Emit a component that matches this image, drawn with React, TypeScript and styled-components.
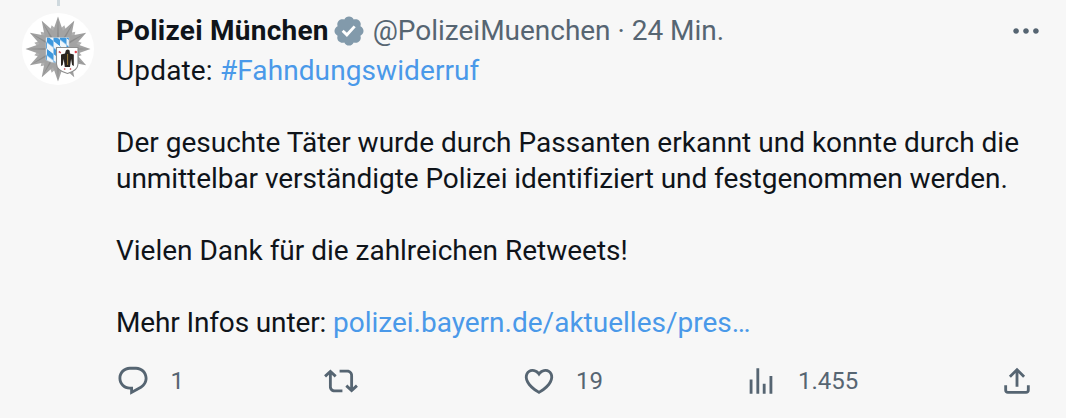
import React from 'react';
import styled, { createGlobalStyle } from 'styled-components';

const color = {
  page: '#f7f7f7',
  text: '#0f141a',
  muted: '#566572',
  link: '#4a99e9',
  badge: '#829aab',
  thread: '#cfd9de',
};

const GlobalStyle = createGlobalStyle`
  * { box-sizing: border-box; }
  body {
    margin: 0;
    background: ${color.page};
    color: ${color.text};
    font-family: Roboto, "Liberation Sans", sans-serif;
  }
`;

const Tweet = styled.article`
  display: grid;
  grid-template-columns: 58px 1fr;
  column-gap: 36px;
  width: 1066px;
  height: 418px;
  padding-left: 21px;
  overflow: hidden;
`;

const AvatarColumn = styled.div`
  display: flex;
  flex-direction: column;
  align-items: center;
  width: 74px;
`;

const ThreadLine = styled.div`
  width: 3px;
  height: 6px;
  margin-bottom: 6px;
  background: ${color.thread};
`;

const Avatar = styled.svg`
  display: block;
  width: 74px;
  height: 74px;
`;

const Content = styled.div`
  display: flex;
  flex-direction: column;
`;

const Header = styled.header`
  display: flex;
  align-items: center;
  height: 36px;
  margin-top: 13px;
  padding-left: 1px;
  padding-right: 23px;
  font-size: 28px;
  line-height: 36px;
  white-space: pre;
`;

const DisplayName = styled.span`
  font-weight: 700;
  letter-spacing: 0.25px;
`;

const Meta = styled.span`
  margin-left: 7px;
  color: ${color.muted};
  letter-spacing: -0.02px;
`;

const Icon = styled.svg<{ $tone?: string }>`
  display: block;
  flex: none;
  width: 34px;
  height: 34px;
  fill: ${p => p.$tone ?? color.muted};
`;

const BadgeSlot = styled.span`
  margin-left: 3px;
`;

const MenuSlot = styled.span`
  margin-left: auto;
`;

const Body = styled.div`
  margin-top: 4px;
  padding-left: 1px;
  font-size: 28px;
  line-height: 36px;
  white-space: pre;
`;

const Line = styled.p<{ $tracking?: number }>`
  height: 36px;
  margin: 0;
  letter-spacing: ${p => p.$tracking ?? 0}px;
`;

const Link = styled.a<{ $tracking?: number }>`
  color: ${color.link};
  letter-spacing: ${p => p.$tracking ?? 0}px;
`;

const Actions = styled.footer`
  display: grid;
  grid-template-columns: 208px 197.5px 222px 256.5px 34px;
  align-items: center;
  height: 34px;
  margin-top: 22px;
  margin-left: 1px;
`;

const Action = styled.div`
  display: flex;
  align-items: center;
  gap: 20.500px;
`;

const Count = styled.span`
  padding-top: 1px;
  color: ${color.muted};
  font-size: 24px;
  line-height: 34px;
`;

const starPoints = (rays: number, outer: number, inner: number, turn: number) =>
  Array.from({ length: rays * 2 }, (_, i) => {
    const r = i % 2 ? inner : outer;
    const a = (Math.PI * i) / rays + turn - Math.PI / 2;
    return `${(37 + r * Math.cos(a)).toFixed(2)},${(37 + r * Math.sin(a)).toFixed(2)}`;
  }).join(' ');

const PoliceStar = () => (
  <Avatar viewBox="0 0 74 74">
    <defs>
      <pattern id="lozenges" width="13" height="13" patternUnits="userSpaceOnUse" patternTransform="translate(26 24) skewY(38)">
        <path d="M0 0h13v13H0z" fill="#eff6fb" />
        <path d="M0 0h6.500v6.500H0zM6.500 6.500H13V13H6.500z" fill="#3f98dd" />
      </pattern>
    </defs>
    <circle cx="37" cy="37" r="36" fill="#fff" />
    <polygon points={starPoints(12, 24.5, 18, Math.PI / 12)} fill="#b0b0b0" />
    <polygon points={starPoints(12, 32.5, 19, 0)} fill="#a3a3a3" />
    <polygon points={starPoints(12, 32.5, 5, 0)} fill="#8c8c8c" />
    <path d="M25 25.500h23V51H36q-6 0-11-3z" fill="url(#lozenges)" stroke="#c3ced6" strokeWidth=".6" />
    <path d="M35.500 35.500h21.500v16.500q0 6.500-10.500 9.500Q35.500 58.500 35.500 52z" fill="#fff" stroke="#8d8d8d" strokeWidth="1.100" />
    <path d="M44.800 38.500q2-1.800 3.800 0l.3 3 3.900 1v11.500l-1.700-1-1-6-1.100 8h-5.200l-1.100-8-1 6-1.700 1V42.500l4-1z" fill="#2b2520" />
    <path d="M46.600 42v11" stroke="#a98438" strokeWidth=".9" />
    <path d="M44.200 56.500l-1 1M49 56.500l1 1M37.800 39.500l2 1.300" stroke="#c94a50" strokeWidth="1.500" />
    <circle cx="54.800" cy="40" r="1.200" fill="#e04450" />
  </Avatar>
);

const paths = {
  more: 'M3 12c0-1.1.9-2 2-2s2 .9 2 2-.9 2-2 2-2-.9-2-2zm9 2c1.1 0 2-.9 2-2s-.9-2-2-2-2 .9-2 2 .9 2 2 2zm7 0c1.1 0 2-.9 2-2s-.9-2-2-2-2 .9-2 2 .9 2 2 2z',
  reply: 'M1.751 10c0-4.42 3.584-8 8.005-8h4.366c4.49 0 8.129 3.64 8.129 8.13 0 2.96-1.607 5.68-4.196 7.11l-8.054 4.46v-3.69h-.067c-4.49.1-8.183-3.51-8.183-8.01zm8.005-6c-3.317 0-6.005 2.69-6.005 6 0 3.37 2.77 6.08 6.138 6.01l.351-.01h1.761v2.3l5.087-2.81c1.951-1.08 3.163-3.13 3.163-5.36 0-3.39-2.744-6.13-6.129-6.13H9.756z',
  retweet: 'M4.5 3.88l4.432 4.14-1.364 1.46L5.5 7.55V16c0 1.1.896 2 2 2H13v2H7.5c-2.209 0-4-1.79-4-4V7.55L1.432 9.48.068 8.02 4.5 3.88zM16.5 6H11V4h5.5c2.209 0 4 1.79 4 4v8.45l2.068-1.93 1.364 1.46-4.432 4.14-4.432-4.14 1.364-1.46 2.068 1.93V8c0-1.1-.896-2-2-2z',
  like: 'M16.697 5.5c-1.222-.06-2.679.51-3.89 2.16l-.805 1.09-.806-1.09C9.984 6.01 8.526 5.44 7.304 5.5c-1.243.07-2.349.78-2.91 1.91-.552 1.12-.633 2.78.479 4.82 1.074 1.97 3.257 4.27 7.129 6.61 3.87-2.34 6.052-4.64 7.126-6.61 1.111-2.04 1.03-3.7.477-4.82-.561-1.13-1.666-1.84-2.908-1.91zm4.187 7.69c-1.351 2.48-4.001 5.12-8.379 7.67l-.503.3-.504-.3c-4.379-2.55-7.029-5.19-8.382-7.67-1.36-2.5-1.41-4.86-.514-6.67.887-1.79 2.647-2.91 4.601-3.01 1.651-.09 3.368.56 4.798 2.01 1.429-1.45 3.146-2.1 4.796-2.01 1.954.1 3.714 1.22 4.601 3.01.896 1.81.846 4.17-.514 6.67z',
  views: 'M8.75 21V3h2v18h-2zM18 21V8.5h2V21h-2zM4 21l.004-10h2L6 21H4zm9.248 0v-7h2v7h-2z',
  share: 'M12 2.59l5.7 5.7-1.41 1.42L13 6.41V16h-2V6.41l-3.3 3.3-1.41-1.42L12 2.59zM21 15l-.02 3.51c0 1.38-1.12 2.49-2.5 2.49H5.5C4.11 21 3 19.88 3 18.5V15h2v3.5c0 .28.22.5.5.5h12.98c.28 0 .5-.22.5-.5L19 15h2z',
};

const Glyph = ({ name }: { name: keyof typeof paths }) => (
  <Icon viewBox="0 0 24 24">
    <path d={paths[name]} />
  </Icon>
);

const VerifiedBadge = () => (
  <BadgeSlot>
    <Icon viewBox="0 0 22 22" $tone={color.badge}>
      <path d="M6 6h10v10H6z" fill="#fff" />
      <path d="M20.396 11c-.018-.646-.215-1.275-.57-1.816-.354-.54-.852-.972-1.438-1.246.223-.607.27-1.264.14-1.897-.131-.634-.437-1.218-.882-1.687-.47-.445-1.053-.75-1.687-.882-.633-.13-1.29-.083-1.897.14-.273-.587-.704-1.086-1.245-1.44S11.647 1.62 11 1.604c-.646.017-1.273.213-1.813.568s-.969.854-1.24 1.44c-.608-.223-1.267-.272-1.902-.14-.635.13-1.22.436-1.69.882-.445.47-.749 1.055-.878 1.688-.13.633-.08 1.29.144 1.896-.587.274-1.087.705-1.443 1.245-.356.54-.555 1.17-.574 1.817.02.647.218 1.276.574 1.817.356.54.856.972 1.443 1.245-.224.606-.274 1.263-.144 1.896.13.634.433 1.218.877 1.688.47.443 1.054.747 1.687.878.633.132 1.29.084 1.897-.136.274.586.705 1.084 1.246 1.439.54.354 1.17.551 1.816.569.647-.016 1.276-.213 1.817-.567s.972-.854 1.245-1.44c.604.239 1.266.296 1.903.164.636-.132 1.22-.447 1.68-.907.46-.46.776-1.044.908-1.681s.075-1.299-.165-1.903c.586-.274 1.084-.705 1.439-1.246.354-.54.551-1.17.569-1.816zM9.662 14.85l-3.429-3.428 1.293-1.302 2.072 2.072 4.4-4.794 1.347 1.246z" />
    </Icon>
  </BadgeSlot>
);

export default function App() {
  return (
    <>
      <GlobalStyle />
      <Tweet>
        <AvatarColumn>
          <ThreadLine />
          <PoliceStar />
        </AvatarColumn>
        <Content>
          <Header>
            <DisplayName>Polizei München</DisplayName>
            <VerifiedBadge />
            <Meta>@PolizeiMuenchen · 24 Min.</Meta>
            <MenuSlot>
              <Glyph name="more" />
            </MenuSlot>
          </Header>
          <Body>
            <Line $tracking={0.16}>
              Update: <Link $tracking={0.09}>#Fahndungswiderruf</Link>
            </Line>
            <Line />
            <Line $tracking={0.01}>Der gesuchte Täter wurde durch Passanten erkannt und konnte durch die</Line>
            <Line $tracking={-0.06}>unmittelbar verständigte Polizei identifiziert und festgenommen werden.</Line>
            <Line />
            <Line $tracking={-0.01}>Vielen Dank für die zahlreichen Retweets!</Line>
            <Line />
            <Line $tracking={-0.14}>
              Mehr Infos unter: <Link>polizei.bayern.de/aktuelles/pres…</Link>
            </Line>
          </Body>
          <Actions>
            <Action>
              <Glyph name="reply" />
              <Count>1</Count>
            </Action>
            <Action>
              <Glyph name="retweet" />
            </Action>
            <Action>
              <Glyph name="like" />
              <Count>19</Count>
            </Action>
            <Action>
              <Glyph name="views" />
              <Count>1.455</Count>
            </Action>
            <Action>
              <Glyph name="share" />
            </Action>
          </Actions>
        </Content>
      </Tweet>
    </>
  );
}
